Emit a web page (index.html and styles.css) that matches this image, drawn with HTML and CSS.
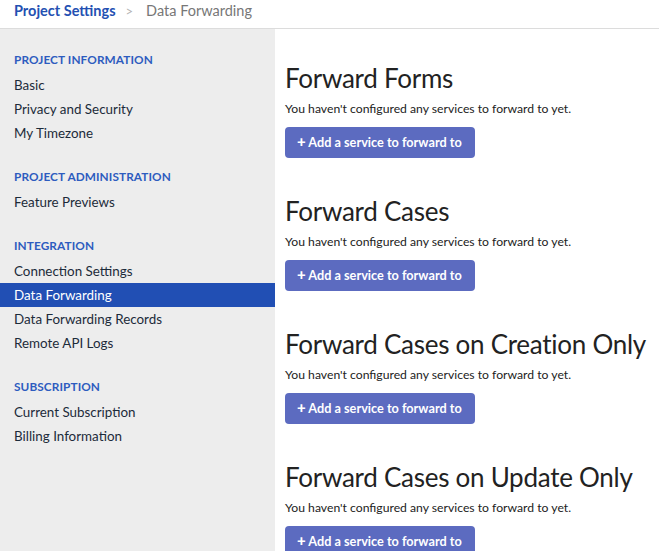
FILE: index.html
```html
<!DOCTYPE html>
<html lang="en">
<head>
<meta charset="utf-8">
<title>Data Forwarding</title>
<link rel="stylesheet" href="styles.css">
</head>
<body>
<header class="topbar">
  <a class="crumb-root" href="#">Project Settings</a>
  <span class="crumb-sep">&gt;</span>
  <span class="crumb-current">Data Forwarding</span>
</header>
<div class="layout">
  <nav class="sidebar">
    <div class="nav-group">
      <div class="nav-title">PROJECT INFORMATION</div>
      <a class="nav-item" href="#">Basic</a>
      <a class="nav-item" href="#">Privacy and Security</a>
      <a class="nav-item" href="#">My Timezone</a>
    </div>
    <div class="nav-group">
      <div class="nav-title">PROJECT ADMINISTRATION</div>
      <a class="nav-item" href="#">Feature Previews</a>
    </div>
    <div class="nav-group">
      <div class="nav-title">INTEGRATION</div>
      <a class="nav-item" href="#">Connection Settings</a>
      <a class="nav-item active" href="#">Data Forwarding</a>
      <a class="nav-item" href="#">Data Forwarding Records</a>
      <a class="nav-item" href="#">Remote API Logs</a>
    </div>
    <div class="nav-group">
      <div class="nav-title">SUBSCRIPTION</div>
      <a class="nav-item" href="#">Current Subscription</a>
      <a class="nav-item" href="#">Billing Information</a>
    </div>
  </nav>
  <main class="content">
    <section class="fwd-section">
      <h2 class="fwd-title">Forward Forms</h2>
      <p class="fwd-note">You haven't configured any services to forward to yet.</p>
      <button class="btn-add"><span class="plus">+</span> Add a service to forward to</button>
    </section>
    <section class="fwd-section">
      <h2 class="fwd-title">Forward Cases</h2>
      <p class="fwd-note">You haven't configured any services to forward to yet.</p>
      <button class="btn-add"><span class="plus">+</span> Add a service to forward to</button>
    </section>
    <section class="fwd-section">
      <h2 class="fwd-title">Forward Cases on Creation Only</h2>
      <p class="fwd-note">You haven't configured any services to forward to yet.</p>
      <button class="btn-add"><span class="plus">+</span> Add a service to forward to</button>
    </section>
    <section class="fwd-section">
      <h2 class="fwd-title">Forward Cases on Update Only</h2>
      <p class="fwd-note">You haven't configured any services to forward to yet.</p>
      <button class="btn-add"><span class="plus">+</span> Add a service to forward to</button>
    </section>
  </main>
</div>
</body>
</html>
```
FILE: styles.css
```css
* { box-sizing: border-box; }
html, body { margin: 0; padding: 0; }
body {
  font-family: Lato, "Noto Sans", sans-serif;
  color: #1c2733;
  background: #fff;
  overflow: hidden;
  height: 551px;
}
.topbar {
  height: 29px;
  border-bottom: 1px solid #dcdcdc;
  display: flex;
  align-items: center;
  padding: 0 14px 7px;
  font-size: 14.5px;
  gap: 10px;
}
.crumb-root {
  color: #2350b2;
  font-weight: 700;
  text-decoration: none;
}
.crumb-sep { color: #b5b5b5; font-size: 13px; }
.crumb-current { color: #777; margin-left: 3px; }
.layout {
  display: flex;
  height: 522px;
}
.sidebar {
  width: 275px;
  flex: none;
  background: #ededed;
  padding-top: 21px;
  display: flex;
  flex-direction: column;
  gap: 22px;
}
.nav-group { display: flex; flex-direction: column; }
.nav-title {
  font-size: 11.8px;
  font-weight: 700;
  color: #2d5cbf;
  padding: 0 14px;
  height: 20px;
  line-height: 20px;
  margin-bottom: 3px;
  letter-spacing: 0.1px;
}
.nav-item {
  display: block;
  height: 24px;
  line-height: 24px;
  padding: 0 14px;
  font-size: 13.4px;
  color: #1c2b3a;
  text-decoration: none;
}
.nav-item.active {
  background: #214fb4;
  color: #fff;
}
.content {
  flex: 1;
  padding: 34px 0 0 10px;
  display: flex;
  flex-direction: column;
  gap: 38px;
}
.fwd-section { display: flex; flex-direction: column; align-items: flex-start; }
.fwd-title {
  margin: 0;
  font-size: 26px;
  font-weight: 400;
  color: #222;
  line-height: 30px;
  letter-spacing: -0.27px;
  white-space: nowrap;
}
.fwd-note {
  margin: 9px 0 11px;
  font-size: 12.2px;
  line-height: 14px;
  color: #222;
}
.btn-add {
  font-family: inherit;
  background: #5c6bc0;
  color: #fff;
  border: none;
  border-radius: 4px;
  height: 31px;
  width: 190px;
  padding: 0 12px 2px;
  font-size: 12.7px;
  line-height: 1;
  font-weight: 700;
  text-align: left;
}
.plus { font-size: 15px; font-weight: 900; line-height: 1; }
```
